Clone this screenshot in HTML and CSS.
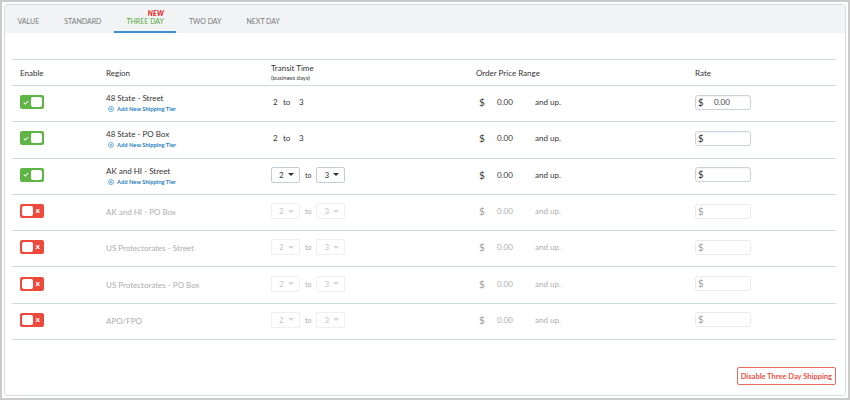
FILE: index.html
```html
<!DOCTYPE html>
<html>
<head>
<meta charset="utf-8">
<link rel="stylesheet" href="styles.css">
</head>
<body>
<div class="frame">
  <div class="card">
    <div class="tabs">
      <div class="tab">VALUE</div>
      <div class="tab">STANDARD</div>
      <div class="tab active">THREE DAY<span class="new">NEW</span></div>
      <div class="tab">TWO DAY</div>
      <div class="tab">NEXT DAY</div>
    </div>
    <div class="content">
      <div class="table">
        <div class="row head">
          <div class="cell">Enable</div>
          <div class="cell">Region</div>
          <div class="cell transit-head"><span>Transit Time</span><span class="sub">(business days)</span></div>
          <div class="cell price-head">Order Price Range</div>
          <div class="cell">Rate</div>
        </div>

        <div class="row">
          <div class="cell"><span class="toggle on"><svg class="mark" viewBox="0 0 8 6" width="6" height="5"><path d="M1 3 L3 5 L7 1" fill="none" stroke="#fff" stroke-width="1.4"/></svg><span class="knob"></span></span></div>
          <div class="cell region"><span class="name">48 State - Street</span><a class="addtier"><svg viewBox="0 0 8 8" width="6" height="6"><circle cx="4" cy="4" r="3.4" fill="none" stroke="#2a7fc1" stroke-width="0.8"/><path d="M4 2.2 V5.8 M2.2 4 H5.8" stroke="#2a7fc1" stroke-width="0.8"/></svg>Add New Shipping Tier</a></div>
          <div class="cell transit"><span class="num">2</span><span class="to">to</span><span class="num">3</span></div>
          <div class="cell price"><span class="dollar">$</span><span class="amt">0.00</span><span class="up">and up.</span></div>
          <div class="cell"><span class="rate"><span class="rd">$</span><span class="rv">0.00</span></span></div>
        </div>

        <div class="row">
          <div class="cell"><span class="toggle on"><svg class="mark" viewBox="0 0 8 6" width="6" height="5"><path d="M1 3 L3 5 L7 1" fill="none" stroke="#fff" stroke-width="1.4"/></svg><span class="knob"></span></span></div>
          <div class="cell region"><span class="name">48 State - PO Box</span><a class="addtier"><svg viewBox="0 0 8 8" width="6" height="6"><circle cx="4" cy="4" r="3.4" fill="none" stroke="#2a7fc1" stroke-width="0.8"/><path d="M4 2.2 V5.8 M2.2 4 H5.8" stroke="#2a7fc1" stroke-width="0.8"/></svg>Add New Shipping Tier</a></div>
          <div class="cell transit"><span class="num">2</span><span class="to">to</span><span class="num">3</span></div>
          <div class="cell price"><span class="dollar">$</span><span class="amt">0.00</span><span class="up">and up.</span></div>
          <div class="cell"><span class="rate"><span class="rd">$</span></span></div>
        </div>

        <div class="row">
          <div class="cell"><span class="toggle on"><svg class="mark" viewBox="0 0 8 6" width="6" height="5"><path d="M1 3 L3 5 L7 1" fill="none" stroke="#fff" stroke-width="1.4"/></svg><span class="knob"></span></span></div>
          <div class="cell region"><span class="name">AK and HI - Street</span><a class="addtier"><svg viewBox="0 0 8 8" width="6" height="6"><circle cx="4" cy="4" r="3.4" fill="none" stroke="#2a7fc1" stroke-width="0.8"/><path d="M4 2.2 V5.8 M2.2 4 H5.8" stroke="#2a7fc1" stroke-width="0.8"/></svg>Add New Shipping Tier</a></div>
          <div class="cell transit sel"><span class="select">2<i class="caret"></i></span><span class="to">to</span><span class="select">3<i class="caret"></i></span></div>
          <div class="cell price"><span class="dollar">$</span><span class="amt">0.00</span><span class="up">and up.</span></div>
          <div class="cell"><span class="rate"><span class="rd">$</span></span></div>
        </div>

        <div class="row off">
          <div class="cell"><span class="toggle offt"><span class="knob"></span><span class="x">x</span></span></div>
          <div class="cell region"><span class="name">AK and HI - PO Box</span></div>
          <div class="cell transit sel"><span class="select">2<i class="caret"></i></span><span class="to">to</span><span class="select">3<i class="caret"></i></span></div>
          <div class="cell price"><span class="dollar">$</span><span class="amt">0.00</span><span class="up">and up.</span></div>
          <div class="cell"><span class="rate"><span class="rd">$</span></span></div>
        </div>

        <div class="row off">
          <div class="cell"><span class="toggle offt"><span class="knob"></span><span class="x">x</span></span></div>
          <div class="cell region"><span class="name">US Protectorates - Street</span></div>
          <div class="cell transit sel"><span class="select">2<i class="caret"></i></span><span class="to">to</span><span class="select">3<i class="caret"></i></span></div>
          <div class="cell price"><span class="dollar">$</span><span class="amt">0.00</span><span class="up">and up.</span></div>
          <div class="cell"><span class="rate"><span class="rd">$</span></span></div>
        </div>

        <div class="row off">
          <div class="cell"><span class="toggle offt"><span class="knob"></span><span class="x">x</span></span></div>
          <div class="cell region"><span class="name">US Protectorates - PO Box</span></div>
          <div class="cell transit sel"><span class="select">2<i class="caret"></i></span><span class="to">to</span><span class="select">3<i class="caret"></i></span></div>
          <div class="cell price"><span class="dollar">$</span><span class="amt">0.00</span><span class="up">and up.</span></div>
          <div class="cell"><span class="rate"><span class="rd">$</span></span></div>
        </div>

        <div class="row off">
          <div class="cell"><span class="toggle offt"><span class="knob"></span><span class="x">x</span></span></div>
          <div class="cell region"><span class="name">APO/FPO</span></div>
          <div class="cell transit sel"><span class="select">2<i class="caret"></i></span><span class="to">to</span><span class="select">3<i class="caret"></i></span></div>
          <div class="cell price"><span class="dollar">$</span><span class="amt">0.00</span><span class="up">and up.</span></div>
          <div class="cell"><span class="rate"><span class="rd">$</span></span></div>
        </div>
      </div>
      <div class="footer">
        <button class="disable">Disable Three Day Shipping</button>
      </div>
    </div>
  </div>
</div>
</body>
</html>
```

FILE: styles.css
```css
* { box-sizing: border-box; }
html, body { margin: 0; padding: 0; background: #fff; }
body { font-family: Lato, "Open Sans", "Liberation Sans", sans-serif; color: #333; }

.frame {
  width: 850px;
  height: 400px;
  border: 2px solid #cbcbcb;
  padding: 2px;
}
.card {
  height: 100%;
  border: 1px solid #d5dce1;
  border-radius: 3px;
  display: flex;
  flex-direction: column;
}

.tabs {
  display: flex;
  height: 28px;
  background: #f1f3f5;
}
.tab {
  position: relative;
  padding: 5px 12.5px 0;
  font-size: 7px;
  color: #7a7a7a;
  height: 28px;
  line-height: 22px;
}
.tab.active {
  color: #57a83d;
  border-bottom: 2px solid #3b8fd6;
}
.new {
  position: absolute;
  top: 4px;
  right: 12.5px;
  line-height: 8px;
  font-size: 7px;
  font-weight: 900;
  font-style: italic;
  color: #e3201c;
  letter-spacing: 0.2px;
}

.content {
  flex: 1;
  padding: 26px 9px 0 7px;
  display: flex;
  flex-direction: column;
}

.table { border-top: 1px solid #cfd8de; }
.row {
  display: grid;
  grid-template-columns: 86px 165px 205px 219px 1fr;
  height: 36.3px;
  border-bottom: 1px solid #cfd8de;
  align-items: center;
  font-size: 8px;
  padding-bottom: 3px;
}
.row.head { height: 26px; padding-bottom: 0; }
.cell { padding-left: 8px; display: flex; align-items: center; }
.transit-head { flex-direction: column; align-items: flex-start; line-height: 10px; padding-top: 1px; }
.transit-head .sub { font-size: 6px; line-height: 10px; }
.price-head { padding-left: 8px; }

.toggle {
  position: relative;
  display: inline-flex;
  align-items: center;
  width: 24px;
  height: 14px;
  border-radius: 2px;
  padding: 2px;
}
.toggle.on { background: #5fb446; justify-content: space-between; }
.toggle.offt { background: #ec4a3c; justify-content: space-between; }
.knob {
  width: 11px;
  height: 10px;
  background: #fff;
  border-radius: 2px;
}
.toggle.on .mark { margin-left: 1px; }
.toggle .x {
  color: #fff;
  font-family: "DejaVu Sans", sans-serif;
  font-weight: bold;
  font-size: 7px;
  line-height: 10px;
  margin-right: 2px;
}

.region { flex-direction: column; align-items: flex-start; padding-top: 2px; }
.region .name { line-height: 10px; }
.addtier {
  display: flex;
  align-items: center;
  font-size: 5.8px;
  font-weight: bold;
  color: #2a7fc1;
  margin-top: 2px;
  margin-left: 2px;
  line-height: 8px;
}
.addtier svg { margin-right: 3px; }

.transit .num { width: 12px; padding-left: 2px; }
.transit .to { width: 14px; }
.transit.sel .to { width: auto; margin: 0 5px 0 5px; font-size: 7px; }
.select {
  display: inline-flex;
  align-items: center;
  justify-content: space-between;
  width: 29px;
  height: 16px;
  border: 1px solid #c4ccd2;
  border-radius: 2px;
  padding: 0 5px 0 7px;
  font-size: 8px;
}
.caret {
  width: 0; height: 0;
  border-left: 3px solid transparent;
  border-right: 3px solid transparent;
  border-top: 3.5px solid #333;
}

.price { padding-left: 11px; }
.price .dollar { width: 18px; font-size: 10px; }
.price .amt { width: 38px; }

.rate {
  display: inline-flex;
  align-items: center;
  width: 56px;
  height: 15px;
  border: 1px solid #ccd3d8;
  border-radius: 3px;
  padding-left: 2px;
  box-shadow: inset 0 1px 1px rgba(0,0,0,0.05);
}
.rate .rd { font-size: 9.5px; width: 16px; color: #222; }
.rate .rv { font-size: 8px; color: #444; }

.row.off { color: #adadad; }
.row.off .select { border-color: #edeff1; color: #c4c4c4; }
.row.off .caret { border-top-color: #d6d6d6; }
.row.off .rate { border-color: #e8ebee; box-shadow: none; }
.row.off .rate .rd { color: #999; }
.row.off .dollar { color: #999; }

.footer {
  display: flex;
  justify-content: flex-end;
  margin-top: 27px;
}
.disable {
  font-family: Lato, "Open Sans", "Liberation Sans", sans-serif;
  font-size: 7.5px;
  font-weight: bold;
  color: #e8524a;
  background: #fff;
  border: 1px solid #ec6a62;
  border-radius: 2px;
  height: 18px;
  padding: 0 3px;
}
```
